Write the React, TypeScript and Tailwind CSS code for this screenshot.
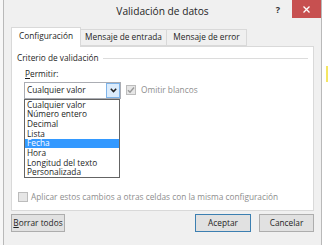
import React from "react";

const items = [
  "Cualquier valor",
  "Número entero",
  "Decimal",
  "Lista",
  "Fecha",
  "Hora",
  "Longitud del texto",
  "Personalizada",
];

function CheckBox({ checked }: { checked?: boolean }) {
  return (
    <div className="flex h-[10px] w-[10px] items-center justify-center border border-[#bcbcbc] bg-[#e6e6e6]">
      {checked && (
        <svg width="8" height="8" viewBox="0 0 8 8">
          <path d="M1 4.2 L3 6.2 L7 1.5" fill="none" stroke="#9a9a9a" strokeWidth="1.4" />
        </svg>
      )}
    </div>
  );
}

export default function App() {
  return (
    <div
      className="flex h-[245px] w-[328px] overflow-hidden bg-white text-[8.3px] text-[#1e1e1e]"
      style={{ fontFamily: '"Open Sans", "Noto Sans", sans-serif' }}
    >
      {/* left sliver of the sheet */}
      <div className="h-full w-[3px] bg-[#f7f7f7]" />

      {/* dialog */}
      <div className="flex h-full w-[319px] flex-col border-l border-r border-[#b9b9b9] bg-[#f0f0f0]">
        {/* title bar */}
        <div className="relative flex h-[24px] shrink-0 items-center justify-center">
          <span className="text-[10.2px] text-[#262626]">Validación de datos</span>
          <span className="absolute right-[41px] top-[3px] text-[9px] font-bold text-[#333]">?</span>
          <div className="absolute right-0 top-0 flex h-[18px] w-[29px] items-center justify-center bg-[#c75050]">
            <svg width="7" height="7" viewBox="0 0 7 7">
              <path d="M0.5 0.5 L6.5 6.5 M6.5 0.5 L0.5 6.5" stroke="#fff" strokeWidth="1.3" />
            </svg>
          </div>
        </div>

        {/* tabs */}
        <div className="mt-[3px] flex h-[19px] shrink-0 items-end px-[7px]">
          <div className="relative z-10 -mb-px flex h-[20px] w-[70px] items-center justify-center border border-b-0 border-[#d9d9d9] bg-white pb-[2px]">
            Configuración
          </div>
          <div className="flex h-[17px] w-[86px] items-center justify-center border border-l-0 border-[#d9d9d9] bg-[#f0f0f0]">
            Mensaje de entrada
          </div>
          <div className="flex h-[17px] w-[80px] items-center justify-center border border-l-0 border-[#d9d9d9] bg-[#f0f0f0]">
            Mensaje de error
          </div>
        </div>

        {/* panel */}
        <div className="mx-[7px] flex h-[165px] shrink-0 flex-col border border-[#d9d9d9] bg-white px-[5px] pt-[5px]">
          <div className="flex items-center gap-[4px]">
            <span>Criterio de validación</span>
            <div className="h-px flex-1 bg-[#dcdcdc]" />
          </div>

          <div className="mt-[4px] pl-[8px]">
            <span>
              <span className="underline">P</span>ermitir:
            </span>
          </div>

          <div className="mt-[1px] flex items-center gap-[5px] pl-[7px]">
            <div className="relative flex h-[17px] w-[97px] items-center border border-[#abadb3] bg-white">
              <span className="pl-[2px]">Cualquier valor</span>
              <div className="absolute right-0 top-0 flex h-[15px] w-[14px] items-center justify-center border border-[#7eb4ea] bg-[#dcecfc]">
                <svg width="7" height="5" viewBox="0 0 7 5">
                  <path d="M0.8 0.8 L3.5 3.6 L6.2 0.8" fill="none" stroke="#222" strokeWidth="1.5" />
                </svg>
              </div>
              {/* open dropdown */}
              <div className="absolute left-[-1px] top-[16px] z-20 flex w-[96px] flex-col border border-[#646464] bg-white">
                {items.map((it) => (
                  <div
                    key={it}
                    className={`flex h-[9.7px] items-center pl-[2px] leading-none ${
                      it === "Fecha" ? "bg-[#3399ff] text-white" : ""
                    }`}
                  >
                    {it}
                  </div>
                ))}
              </div>
            </div>
            <CheckBox checked />
            <span className="text-[#8d8d8d]">Omitir blancos</span>
          </div>

          <div className="mt-auto mb-[7px] flex items-center gap-[3px] pl-px">
            <CheckBox />
            <span className="text-[#8d8d8d]">
              Aplicar estos cambios a otras celdas con la misma configuración
            </span>
          </div>
        </div>

        {/* buttons */}
        <div className="mt-[3px] flex shrink-0 px-[7px]">
          <div className="flex h-[18px] w-[54px] items-center justify-center border border-[#adadad] bg-[#e1e1e1]">
            <span>
              <span className="underline">B</span>orrar todos
            </span>
          </div>
          <div className="ml-auto flex h-[18px] w-[56px] items-center justify-center border border-[#3c7fb1] bg-[#e1e1e1]">
            Aceptar
          </div>
          <div className="ml-[8px] flex h-[18px] w-[55px] items-center justify-center border border-[#adadad] bg-[#e1e1e1]">
            Cancelar
          </div>
        </div>
      </div>

      {/* right sliver of the sheet */}
      <div className="flex h-full flex-1 flex-col bg-white">
        <div className="h-[66px]" />
        <div className="h-[16px] w-[2px] self-end bg-[#f5e663]" />
      </div>
    </div>
  );
}
